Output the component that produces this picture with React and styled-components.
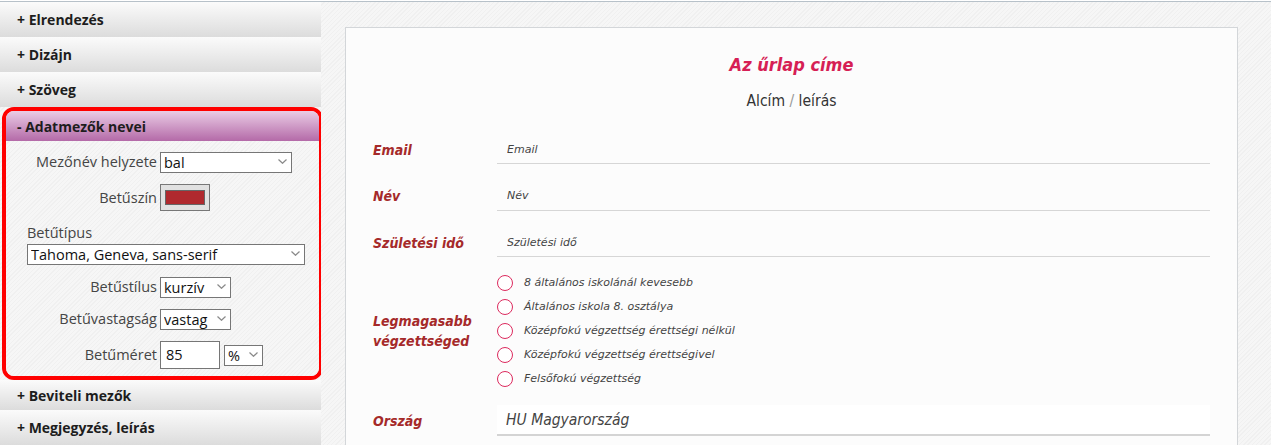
import React from "react";
import styled, { createGlobalStyle } from "styled-components";

const GlobalStyle = createGlobalStyle`
    html, body {
        margin: 0;
        padding: 0;
        overflow: hidden;
        background: #fff;
    }
    body {
        font-family: "Open Sans", "Noto Sans", sans-serif;
    }
`;

const texture = "repeating-linear-gradient(135deg, #f6f6f6 0px, #f6f6f6 2px, #f0f0f0 2px, #f0f0f0 3px)";
const formFont = `"DejaVu Sans Condensed", "DejaVu Sans", sans-serif`;

const Page = styled.div`
    padding-top: 1px;
    background: #fff;
`;

const Frame = styled.div`
    display: flex;
    height: 443px;
    border-top: 1px solid #b7c1c9;
`;

const Sidebar = styled.aside`
    width: 321px;
    flex: none;
    display: flex;
    flex-direction: column;
    background: ${texture};
`;

const SectionHeader = styled.div`
    flex: none;
    height: ${p => p.$h}px;
    box-sizing: border-box;
    display: flex;
    align-items: center;
    padding-left: ${p => (p.$active ? 11 : 17)}px;
    font: 700 14px "Open Sans", sans-serif;
    color: #1d1d1d;
    background: ${p => (p.$active ? "linear-gradient(#eacce5, #b46aa8)" : "linear-gradient(#fbfbfb, #dcdcdc)")};
`;

const Highlight = styled.div`
    margin: 0 -2px 0 2px;
    border: 4px solid #ff0000;
    border-radius: 12px;
    overflow: hidden;
`;

const Panel = styled.div`
    display: flex;
    flex-direction: column;
    gap: 11.5px;
    padding: 10px 14px 11.5px 21px;
    background: ${texture};
`;

const SettingRow = styled.div`
    display: grid;
    grid-template-columns: 130px auto;
    column-gap: 3px;
    align-items: center;
    justify-items: start;
`;

const SettingLabel = styled.label`
    justify-self: end;
    font-size: 14.5px;
    color: #454545;
    white-space: nowrap;
`;

const StackedLabel = styled.label`
    display: block;
    font-size: 14.5px;
    line-height: 21px;
    color: #454545;
`;

const Controls = styled.div`
    display: flex;
    align-items: center;
    gap: 4px;
`;

const SelectWrap = styled.div`
    position: relative;
    width: ${p => (p.$w ? `${p.$w}px` : "100%")};
    height: 21px;
`;

const NativeSelect = styled.select`
    appearance: none;
    width: 100%;
    height: 100%;
    box-sizing: border-box;
    margin: 0;
    border: 1px solid #767676;
    border-radius: 0;
    background: #fff;
    padding: 0 0 0 3px;
    font: 14.5px "Open Sans", sans-serif;
    color: #111;
    outline: none;
`;

const Chevron = styled.svg`
    position: absolute;
    right: 5px;
    top: 8px;
    pointer-events: none;
`;

const Swatch = styled.button`
    width: 50px;
    height: 27px;
    box-sizing: border-box;
    margin: 0;
    padding: 5px 4px;
    border: 1px solid #777;
    border-radius: 0;
    background: #e1e1e1;
    display: flex;
`;

const SwatchColor = styled.span`
    flex: 1;
    background: ${p => p.$color};
    border: 1px solid #666;
`;

const NumberBox = styled.input`
    width: 60px;
    height: 28px;
    box-sizing: border-box;
    margin: 0;
    border: 1px solid #767676;
    border-radius: 0;
    padding: 0 0 0 5px;
    font: 14.5px "Open Sans", sans-serif;
    color: #111;
    background: #fff;
`;

const Main = styled.main`
    flex: 1;
    min-width: 0;
    padding: 25px 33px 0 24px;
    background: ${texture};
    overflow: hidden;
`;

const Card = styled.section`
    border: 1px solid #d3d6d9;
    background: #fcfcfc;
    padding: 25px 27px 40px;
`;

const Title = styled.h1`
    margin: 0;
    text-align: center;
    font: italic bold 18px ${formFont};
    font-stretch: condensed;
    line-height: 24px;
    color: #d61f55;
`;

const Subtitle = styled.p`
    margin: 14px 0 0;
    text-align: center;
    font: 15.5px ${formFont};
    font-stretch: condensed;
    line-height: 20px;
    color: #333;
`;

const Slash = styled.span`
    color: #9a9a9a;
`;

const Fields = styled.div`
    display: flex;
    flex-direction: column;
    gap: 17.5px;
    margin-top: 24px;
`;

const FieldRow = styled.div`
    display: grid;
    grid-template-columns: 124px 1fr;
    align-items: center;
`;

const FieldLabel = styled.label`
    font: italic bold 14px ${formFont};
    font-stretch: condensed;
    line-height: 20px;
    color: #a52a2a;
`;

const TextInput = styled.input`
    height: 29px;
    box-sizing: border-box;
    margin: 0;
    border: none;
    border-bottom: 1px solid #d6d6d6;
    background: transparent;
    padding: 0 10px;
    font: italic 11px "DejaVu Sans", sans-serif;
    color: #444;
    outline: none;

    &::placeholder {
        color: #444;
        opacity: 1;
    }
`;

const RadioList = styled.div`
    display: flex;
    flex-direction: column;
    margin: -4px 0 -3px;
`;

const RadioItem = styled.label`
    height: 24px;
    display: flex;
    align-items: center;
    gap: 11px;
    font: italic 11px "DejaVu Sans", sans-serif;
    color: #444;
`;

const RadioDot = styled.input`
    appearance: none;
    margin: 0;
    width: 16px;
    height: 16px;
    box-sizing: border-box;
    border: 1.5px solid #dc2a5e;
    border-radius: 50%;
    background: #fff;
`;

const CountrySelect = styled.select`
    appearance: none;
    height: 31px;
    box-sizing: border-box;
    margin: 0;
    border: none;
    border-bottom: 2px solid #d4d4d4;
    border-radius: 0;
    background: #fff;
    padding: 0 9px;
    font: italic 15.5px ${formFont};
    font-stretch: condensed;
    color: #444;
    outline: none;
`;

function Select({ width, value, options }) {
    return (
        <SelectWrap $w={width}>
            <NativeSelect defaultValue={value}>
                {options.map(o => (
                    <option key={o}>{o}</option>
                ))}
            </NativeSelect>
            <Chevron width="9" height="5" viewBox="0 0 9 5">
                <path d="M0.5 0.5 L4.5 4.3 L8.5 0.5" fill="none" stroke="#8a8a8a" strokeWidth="1.2" />
            </Chevron>
        </SelectWrap>
    );
}

const educations = [
    "8 általános iskolánál kevesebb",
    "Általános iskola 8. osztálya",
    "Középfokú végzettség érettségi nélkül",
    "Középfokú végzettség érettségivel",
    "Felsőfokú végzettség"
];

export default function App() {
    return (
        <Page>
            <GlobalStyle />
            <Frame>
                <Sidebar>
                    <SectionHeader $h={35}>+ Elrendezés</SectionHeader>
                    <SectionHeader $h={35}>+ Dizájn</SectionHeader>
                    <SectionHeader $h={35}>+ Szöveg</SectionHeader>
                    <Highlight>
                        <SectionHeader $h={30} $active>
                            - Adatmezők nevei
                        </SectionHeader>
                        <Panel>
                            <SettingRow>
                                <SettingLabel>Mezőnév helyzete</SettingLabel>
                                <Select width={132} value="bal" options={["bal", "felül", "jobb"]} />
                            </SettingRow>
                            <SettingRow>
                                <SettingLabel>Betűszín</SettingLabel>
                                <Swatch type="button">
                                    <SwatchColor $color="#b0292e" />
                                </Swatch>
                            </SettingRow>
                            <div>
                                <StackedLabel>Betűtípus</StackedLabel>
                                <Select
                                    value="Tahoma, Geneva, sans-serif"
                                    options={["Tahoma, Geneva, sans-serif", "Arial, Helvetica, sans-serif"]}
                                />
                            </div>
                            <SettingRow>
                                <SettingLabel>Betűstílus</SettingLabel>
                                <Select width={71} value="kurzív" options={["normál", "kurzív"]} />
                            </SettingRow>
                            <SettingRow>
                                <SettingLabel>Betűvastagság</SettingLabel>
                                <Select width={71} value="vastag" options={["normál", "vastag"]} />
                            </SettingRow>
                            <SettingRow>
                                <SettingLabel>Betűméret</SettingLabel>
                                <Controls>
                                    <NumberBox defaultValue="85" />
                                    <Select width={39} value="%" options={["%", "px"]} />
                                </Controls>
                            </SettingRow>
                        </Panel>
                    </Highlight>
                    <SectionHeader $h={30}>+ Beviteli mezők</SectionHeader>
                    <SectionHeader $h={35}>+ Megjegyzés, leírás</SectionHeader>
                </Sidebar>
                <Main>
                    <Card>
                        <Title>Az űrlap címe</Title>
                        <Subtitle>
                            Alcím <Slash>/</Slash> leírás
                        </Subtitle>
                        <Fields>
                            <FieldRow>
                                <FieldLabel>Email</FieldLabel>
                                <TextInput placeholder="Email" />
                            </FieldRow>
                            <FieldRow>
                                <FieldLabel>Név</FieldLabel>
                                <TextInput placeholder="Név" />
                            </FieldRow>
                            <FieldRow>
                                <FieldLabel>Születési idő</FieldLabel>
                                <TextInput placeholder="Születési idő" />
                            </FieldRow>
                            <FieldRow>
                                <FieldLabel>
                                    Legmagasabb
                                    <br />
                                    végzettséged
                                </FieldLabel>
                                <RadioList>
                                    {educations.map(e => (
                                        <RadioItem key={e}>
                                            <RadioDot type="radio" name="edu" />
                                            {e}
                                        </RadioItem>
                                    ))}
                                </RadioList>
                            </FieldRow>
                            <FieldRow>
                                <FieldLabel>Ország</FieldLabel>
                                <CountrySelect defaultValue="HU Magyarország">
                                    <option>HU Magyarország</option>
                                </CountrySelect>
                            </FieldRow>
                        </Fields>
                    </Card>
                </Main>
            </Frame>
        </Page>
    );
}
